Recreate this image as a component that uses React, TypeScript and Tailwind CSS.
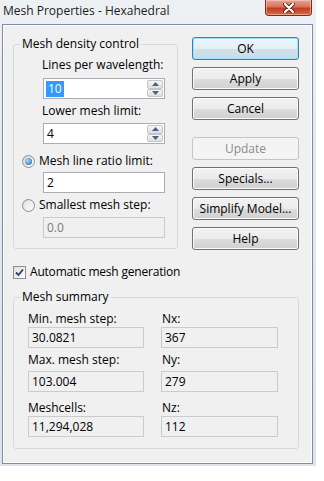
import React from "react";

type BtnProps = { label: string; primary?: boolean; disabled?: boolean };

function Btn({ label, primary, disabled }: BtnProps) {
  if (disabled) {
    return (
      <div className="h-[23px] w-[107px] rounded-[3px] border border-[#c3c6c9] bg-[#f4f4f4] text-[#8b8b8b] flex items-center justify-center">
        {label}
      </div>
    );
  }
  if (primary) {
    return (
      <div className="h-[23px] w-[107px] rounded-[3px] border border-[#3c7fb1] bg-[linear-gradient(180deg,#eef6fb_0%,#e4eef5_50%,#d2e2ec_51%,#c8dbe7_100%)] shadow-[inset_0_0_0_1px_#9fe2fd] flex items-center justify-center">
        {label}
      </div>
    );
  }
  return (
    <div className="h-[23px] w-[107px] rounded-[3px] border border-[#707070] bg-[linear-gradient(180deg,#f2f2f2_0%,#ebebeb_50%,#dddddd_51%,#cfcfcf_100%)] shadow-[inset_0_0_0_1px_#fcfcfc] flex items-center justify-center">
      {label}
    </div>
  );
}

function Spinner() {
  return (
    <div className="flex flex-col w-[16px] h-full">
      <div className="flex-1 border border-[#c2c5ca] rounded-[2px] bg-[linear-gradient(180deg,#f6f6f6,#dedede)] flex items-center justify-center">
        <svg width="7" height="4" viewBox="0 0 7 4">
          <path d="M0 4 L3.5 0 L7 4 Z" fill="#4d6185" />
        </svg>
      </div>
      <div className="flex-1 border border-[#c2c5ca] rounded-[2px] bg-[linear-gradient(180deg,#f6f6f6,#dedede)] flex items-center justify-center">
        <svg width="7" height="4" viewBox="0 0 7 4">
          <path d="M0 0 L3.5 4 L7 0 Z" fill="#4d6185" />
        </svg>
      </div>
    </div>
  );
}

function Radio({ checked }: { checked?: boolean }) {
  return (
    <div className="w-[13px] h-[13px] rounded-full border border-[#8e8f8f] bg-[linear-gradient(135deg,#d4d4d4,#ffffff)] flex items-center justify-center">
      {checked ? (
        <div className="w-[7px] h-[7px] rounded-full bg-[radial-gradient(circle_at_35%_35%,#a9dcf9,#1f5ea8)]" />
      ) : (
        <div className="w-[9px] h-[9px] rounded-full bg-[linear-gradient(135deg,#e4e4e4,#fafafa)]" />
      )}
    </div>
  );
}

function GroupTitle({ text }: { text: string }) {
  return (
    <span className="absolute -top-[9px] left-[6px] px-[2px] bg-[#f0f0f0] leading-[16px]">
      {text}
    </span>
  );
}

function Field({ value }: { value: string }) {
  return (
    <div className="h-[21px] border border-[#c9cbce] bg-[#f0f0f0] px-[3px] flex items-center">
      {value}
    </div>
  );
}

export default function App() {
  return (
    <div className="w-[324px] h-[481px] bg-white font-['Open_Sans','Noto_Sans',sans-serif] text-[12px] text-black overflow-hidden">
      <div className="w-[316px] h-[466px] bg-[linear-gradient(180deg,#eef1f4_0%,#e4e9ef_30%,#dce4ee_100%)] flex flex-col">
        {/* title bar */}
        <div className="h-[24px] flex items-start justify-between">
          <span className="ml-[3px] mt-[3px] leading-[16px] text-[12px] text-[#1b1b1b]">
            Mesh Properties - Hexahedral
          </span>
          <div className="mr-[4px] w-[47px] h-[16px] rounded-b-[4px] border border-t-0 border-[#7a2a1c] bg-[linear-gradient(180deg,#e9a492_0%,#d8735c_45%,#c43c22_55%,#d86a48_100%)] shadow-[inset_0_0_0_1px_rgba(255,220,210,0.5)] flex items-center justify-center">
            <svg width="12" height="10" viewBox="0 0 12 10">
              <path d="M2 1 L10 9 M10 1 L2 9" stroke="#5b2418" strokeWidth="4" strokeLinecap="round" />
              <path d="M2 1 L10 9 M10 1 L2 9" stroke="#ffffff" strokeWidth="2.2" strokeLinecap="round" />
            </svg>
          </div>
        </div>

        {/* client area */}
        <div className="ml-[2px] w-[311px] h-[440px] border border-[#7e8ca6] bg-[#f0f0f0] shadow-[inset_0_0_0_1px_#fbfbfb] pl-[10px]">
          <div className="flex items-start gap-[14px]">
            {/* mesh density control */}
            <div className="mt-[19px] relative w-[165px] h-[205px] rounded-[3px] border border-[#d5d9dd] pt-[12px]">
              <GroupTitle text="Mesh density control" />
              <div className="pl-[28px] leading-[16px]">Lines per wavelength:</div>
              <div className="mt-[5px] ml-[29px] w-[122px] h-[21px] border border-[#abadb3] bg-white flex items-center justify-between pl-[2px] pr-[1px] py-[1px]">
                <span className="bg-[#3399ff] text-white leading-[16px] px-[2px]">10</span>
                <Spinner />
              </div>
              <div className="mt-[4px] pl-[28px] leading-[16px]">Lower mesh limit:</div>
              <div className="mt-[4px] ml-[29px] w-[122px] h-[21px] border border-[#abadb3] bg-white flex items-center justify-between pl-[3px] pr-[1px] py-[1px]">
                <span>4</span>
                <Spinner />
              </div>
              <div className="mt-[9px] pl-[8px] flex items-center gap-[4px] leading-[16px]">
                <Radio checked />
                <span>Mesh line ratio limit:</span>
              </div>
              <div className="mt-[3px] ml-[29px] w-[122px] h-[21px] border border-[#abadb3] bg-white flex items-center pl-[3px]">
                2
              </div>
              <div className="mt-[4px] pl-[8px] flex items-center gap-[4px] leading-[16px]">
                <Radio />
                <span>Smallest mesh step:</span>
              </div>
              <div className="mt-[4px] ml-[29px] w-[122px] h-[21px] border border-[#c9cbce] bg-[#f0f0f0] text-[#7a7a7a] flex items-center pl-[3px]">
                0.0
              </div>
            </div>

            {/* buttons */}
            <div className="mt-[12px] flex flex-col gap-[7px]">
              <Btn label="OK" primary />
              <Btn label="Apply" />
              <Btn label="Cancel" />
              <div className="mt-[10px]">
                <Btn label="Update" disabled />
              </div>
              <Btn label="Specials..." />
              <Btn label="Simplify Model..." />
              <Btn label="Help" />
            </div>
          </div>

          {/* auto mesh checkbox */}
          <div className="mt-[14px] flex items-center gap-[4px] leading-[16px]">
            <div className="w-[13px] h-[13px] border border-[#8e8f8f] bg-[linear-gradient(135deg,#dedede,#ffffff)] flex items-center justify-center">
              <svg width="9" height="9" viewBox="0 0 9 9">
                <path d="M1 4.5 L3.5 7 L8 1.5" fill="none" stroke="#2b3e6b" strokeWidth="1.8" />
              </svg>
            </div>
            <span className="tracking-[-0.2px]">Automatic mesh generation</span>
          </div>

          {/* mesh summary */}
          <div className="mt-[17px] relative w-[286px] h-[152px] rounded-[3px] border border-[#d5d9dd] pt-[13px] pl-[14px]">
            <GroupTitle text="Mesh summary" />
            <div className="grid grid-cols-[116px_117px] gap-x-[17px]">
              <div className="leading-[16px]">Min. mesh step:</div>
              <div className="leading-[16px] pl-[1px]">Nx:</div>
              <div>
                <Field value="30.0821" />
              </div>
              <div>
                <Field value="367" />
              </div>
              <div className="mt-[4px] leading-[16px]">Max. mesh step:</div>
              <div className="mt-[4px] leading-[16px] pl-[1px]">Ny:</div>
              <div className="mt-[3px]">
                <Field value="103.004" />
              </div>
              <div className="mt-[3px]">
                <Field value="279" />
              </div>
              <div className="mt-[8px] leading-[16px]">Meshcells:</div>
              <div className="mt-[8px] leading-[16px] pl-[1px]">Nz:</div>
              <div>
                <Field value="11,294,028" />
              </div>
              <div>
                <Field value="112" />
              </div>
            </div>
          </div>
        </div>
      </div>
    </div>
  );
}
